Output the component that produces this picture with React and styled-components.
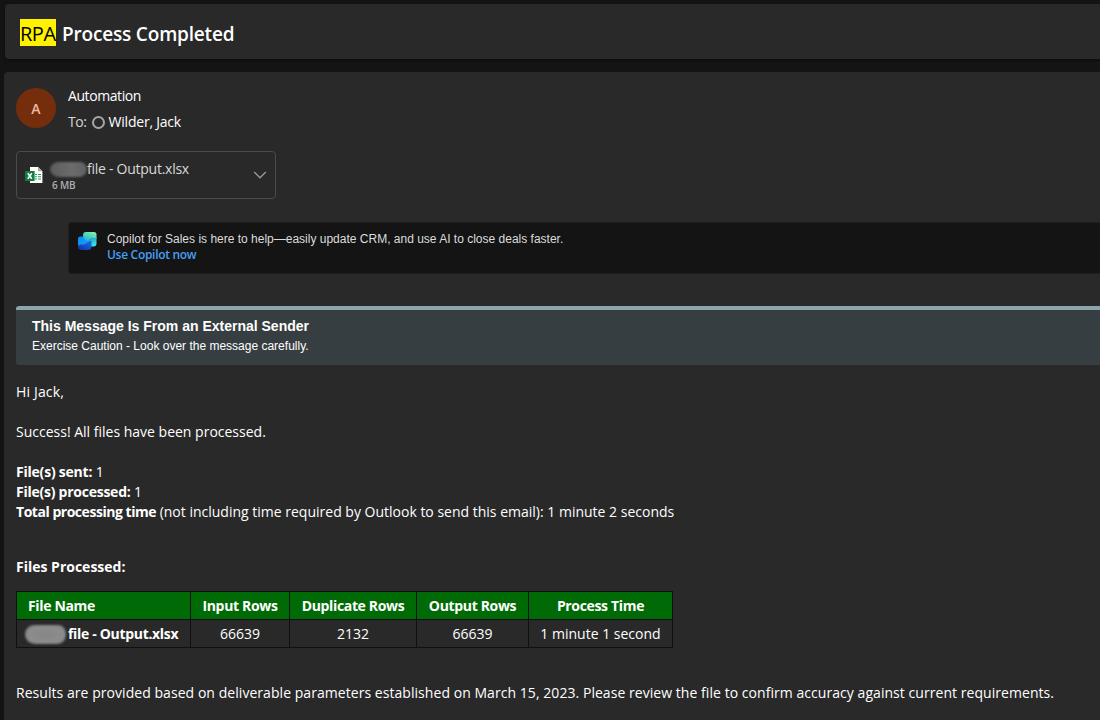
import React from "react";
import styled, { createGlobalStyle } from "styled-components";

const Global = createGlobalStyle`
  *, *::before, *::after { box-sizing: border-box; }
  html, body { margin: 0; background: #141414; }
  body {
    width: 1100px;
    height: 720px;
    overflow: hidden;
    color: #fff;
    font: 400 14px/20px "Open Sans", "Noto Sans", sans-serif;
    white-space: nowrap;
  }
`;

const Page = styled.main`
  display: flex;
  flex-direction: column;
  gap: 13px;
  height: 720px;
  padding: 4px 0 0 4px;
  overflow: hidden;
`;

const SubjectBar = styled.header`
  display: flex;
  align-items: flex-start;
  gap: 6px;
  flex: none;
  height: 55px;
  margin-left: 1px;
  padding: 15px 0 0 15px;
  background: #292929;
  border-radius: 4px 0 0 4px;
  box-shadow: 0 1px 3px rgba(0, 0, 0, 0.5);
  font-size: 20px;
  line-height: 27px;
`;

const Highlight = styled.mark`
  width: 36px;
  height: 27px;
  padding-top: 1px;
  background: #fff100;
  color: #000;
  letter-spacing: -0.5px;
`;

const Subject = styled.h1`
  margin: 2px 0 0;
  font-size: 19px;
  font-weight: 600;
  letter-spacing: -0.18px;
`;

const Message = styled.article`
  display: flex;
  flex-direction: column;
  flex: none;
  height: 660px;
  padding: 15px 0 0 12px;
  background: #292929;
  border-radius: 4px 0 0 0;
`;

const Sender = styled.section`
  display: flex;
  gap: 12px;
  height: 64px;
`;

const Avatar = styled.div`
  display: flex;
  align-items: center;
  justify-content: center;
  width: 40px;
  height: 40px;
  margin-top: 1px;
  padding-top: 1px;
  border-radius: 50%;
  background: #742e0b;
  color: #eaba9f;
  font-size: 14px;
  font-weight: 600;
`;

const SenderLines = styled.div`
  display: flex;
  flex-direction: column;
  gap: 6px;
  margin-top: -1px;
  letter-spacing: -0.42px;
`;

const Recipient = styled.div`
  display: flex;
  align-items: center;
  color: #d6d6d6;
`;

const Presence = styled.span`
  width: 13px;
  height: 13px;
  margin: 1px 4px 0 5px;
  border: 2px solid #a6a6a6;
  border-radius: 50%;
`;

const RecipientName = styled.span`
  color: #fff;
  font-weight: 500;
  letter-spacing: -0.22px;
`;

const Attachment = styled.section`
  display: flex;
  align-items: center;
  width: 260px;
  height: 48px;
  padding: 0 8px 0 8px;
  border: 1px solid #4b4b4b;
  border-radius: 4px;
`;

const FileMeta = styled.div`
  flex: 1;
  margin: 2px 0 0 7px;
`;

const FileLine = styled.div`
  display: flex;
  align-items: center;
  height: 18px;
  color: #d9d9d9;
  letter-spacing: -0.26px;
`;

const Redacted = styled.span`
  flex: none;
  width: ${(p) => p.$w}px;
  height: ${(p) => p.$h}px;
  border-radius: 9px 7px 8px 10px / 50%;
  background: ${(p) => p.$bg};
  filter: blur(0.8px);
`;

const FileSize = styled.div`
  height: 14px;
  padding-left: 2px;
  color: #adadad;
  font-size: 10px;
  font-weight: 600;
  line-height: 14px;
  letter-spacing: -0.15px;
`;

const CopilotBanner = styled.aside`
  display: flex;
  flex: none;
  gap: 10px;
  height: 52px;
  margin: 23px 0 0 52px;
  padding: 9px 0 0 9px;
  border: 1px solid #202020;
  border-right: 0;
  border-radius: 3px 0 0 3px;
  background: #141414;
  color: #dcdcdc;
  font: 400 12px/16px "Liberation Sans", Arial, sans-serif;
`;

const CopilotLink = styled.a`
  display: block;
  color: #479ef5;
  font: 600 12px/16px "Open Sans", sans-serif;
  letter-spacing: -0.3px;
`;

const BannerText = styled.div`
  margin-top: -1px;
`;

const Caution = styled.aside`
  flex: none;
  height: 59px;
  margin-top: 32px;
  padding: 7px 0 0 16px;
  border-top: 4px solid #8ea3ab;
  border-radius: 3px 0 0 3px;
  background: #373e41;
  font: 400 12px/18px "Liberation Sans", Arial, sans-serif;
`;

const CautionTitle = styled.div`
  height: 20px;
  font-size: 14px;
  font-weight: 700;
  line-height: 18px;
`;

const Body = styled.section`
  margin-top: 17px;
`;

const Line = styled.p`
  height: 20px;
  margin: ${(p) => p.$top || 0}px 0 0;
  font-weight: 400;
  letter-spacing: ${(p) => p.$ls || 0}px;
`;

const Label = styled.strong`
  font-weight: 700;
  letter-spacing: ${(p) => p.$ls || 0}px;
`;

const Results = styled.table`
  width: 656px;
  margin-top: 14px;
  border-collapse: collapse;
  table-layout: fixed;
  text-align: center;
`;

const Head = styled.th`
  height: 28px;
  padding: 1px ${(p) => (p.$left ? "0 0 11px" : "0 0")};
  border: 1px solid #101010;
  background: #006b06;
  text-align: ${(p) => (p.$left ? "left" : "center")};
  letter-spacing: -0.34px;
  font-weight: 700;
`;

const Cell = styled.td`
  height: 28px;
  padding: 1px 0 0;
  border: 1px solid #101010;
`;

const FileCell = styled.div`
  display: flex;
  align-items: center;
  gap: 2px;
  padding-left: 8px;
  font-weight: 700;
  letter-spacing: -0.32px;
`;

const ExcelIcon = () => (
  <svg width="18" height="18" viewBox="0 0 18 18">
    <path d="M5 1h8l4.400 4.200V17H5z" fill="#fff" />
    <path d="M13 1v4.200h4.400z" fill="#a7a7a7" />
    <path d="M10 8h2v1h-2zm3 0h3v1h-3zM10 10.200h2v1h-2zm3 0h3v1h-3zM10 12.400h2v1h-2zm3 0h3v1h-3z" fill="#21a366" />
    <rect x="0" y="5" width="9.600" height="10" rx=".5" fill="#107c41" />
    <path d="M2.800 7.200l4 5.600M6.800 7.200l-4 5.600" stroke="#fff" strokeWidth="1.5" fill="none" />
  </svg>
);

const Chevron = () => (
  <svg width="14" height="8" viewBox="0 0 14 8">
    <path d="M1.200 1l5.800 5.800L12.800 1" fill="none" stroke="#999" strokeWidth="1.3" />
  </svg>
);

const CopilotIcon = () => (
  <svg width="19" height="19" viewBox="0 0 19 19">
    <defs>
      <linearGradient id="cpTop" x1="0.2" y1="1" x2="0.9" y2="0">
        <stop offset="0" stopColor="#18b3d6" />
        <stop offset="1" stopColor="#8ff0a8" />
      </linearGradient>
      <linearGradient id="cpRight" x1="0" y1="0" x2="0.5" y2="1">
        <stop offset="0" stopColor="#128fa8" />
        <stop offset="1" stopColor="#3fe0ee" />
      </linearGradient>
      <linearGradient id="cpLeft" x1="0" y1="0" x2="1" y2="1">
        <stop offset="0" stopColor="#0a8af5" />
        <stop offset="1" stopColor="#1ba4f5" />
      </linearGradient>
      <linearGradient id="cpBottom" x1="1" y1="0" x2="0" y2="1">
        <stop offset="0" stopColor="#1a6ff0" />
        <stop offset="1" stopColor="#10309c" />
      </linearGradient>
    </defs>
    <path d="M8 0h8a2.500 2.500 0 0 1 2.500 2.500V7L12 9H5V3A3 3 0 0 1 8 0z" fill="url(#cpTop)" />
    <path d="M18.500 5v6.500a3 3 0 0 1-3 3H11L10 9c2-4 6-2 8.500-4z" fill="url(#cpRight)" />
    <path d="M2.500 4.500H5.500c0 4 3.500 4.500 8 4.500L10 14H0V7a2.500 2.500 0 0 1 2.500-2.500z" fill="url(#cpLeft)" />
    <path d="M0 14c1.500-2.500 4.500-1 7-2 3-1.200 3-3 6.500-3v5.500a3.500 3.500 0 0 1-3.500 3.500H3.500A3.500 3.500 0 0 1 0 14.500z" fill="url(#cpBottom)" />
  </svg>
);

const widths = [174, 99, 127, 112, 144];

export default function App() {
  return (
    <>
      <Global />
      <Page>
        <SubjectBar>
          <Highlight>RPA</Highlight>
          <Subject>Process Completed</Subject>
        </SubjectBar>
        <Message>
          <Sender>
            <Avatar>A</Avatar>
            <SenderLines>
              <div>Automation</div>
              <Recipient>
                To:
                <Presence />
                <RecipientName>Wilder, Jack</RecipientName>
              </Recipient>
            </SenderLines>
          </Sender>
          <Attachment>
            <ExcelIcon />
            <FileMeta>
              <FileLine>
                <Redacted $w={37} $h={15} $bg="linear-gradient(90deg, #5c5c5c, #6c6c6c 60%, #606060)" />
                file - Output.xlsx
              </FileLine>
              <FileSize>6 MB</FileSize>
            </FileMeta>
            <Chevron />
          </Attachment>
          <CopilotBanner>
            <CopilotIcon />
            <BannerText>
              Copilot for Sales is here to help—easily update CRM, and use AI to close deals faster.
              <CopilotLink>Use Copilot now</CopilotLink>
            </BannerText>
          </CopilotBanner>
          <Caution>
            <CautionTitle>This Message Is From an External Sender</CautionTitle>
            Exercise Caution - Look over the message carefully.
          </Caution>
          <Body>
            <Line $ls={0.16}>Hi Jack,</Line>
            <Line $top={20}>Success! All files have been processed.</Line>
            <Line $top={20}><Label $ls={-0.22}>File(s) sent:</Label> 1</Line>
            <Line><Label $ls={-0.25}>File(s) processed:</Label> 1</Line>
            <Line>
              <Label $ls={-0.47}>Total processing time</Label>{" "}
              (not including time required by Outlook to send this email): 1 minute 2 seconds
            </Line>
            <Line $top={35}><Label>Files Processed:</Label></Line>
            <Results>
              <colgroup>{widths.map((w) => <col key={w} width={w} />)}</colgroup>
              <thead>
                <tr>
                  <Head $left>File Name</Head>
                  <Head>Input Rows</Head>
                  <Head>Duplicate Rows</Head>
                  <Head>Output Rows</Head>
                  <Head>Process Time</Head>
                </tr>
              </thead>
              <tbody>
                <tr>
                  <Cell>
                    <FileCell>
                      <Redacted $w={41} $h={19} $bg="radial-gradient(ellipse, #858585, #8d8d8d 60%, #777)" />
                      file - Output.xlsx
                    </FileCell>
                  </Cell>
                  <Cell>66639</Cell>
                  <Cell>2132</Cell>
                  <Cell>66639</Cell>
                  <Cell>1 minute 1 second</Cell>
                </tr>
              </tbody>
            </Results>
            <Line $top={35} $ls={0.05}>
              Results are provided based on deliverable parameters established on March 15, 2023. Please review the file to confirm accuracy against current requirements.
            </Line>
          </Body>
        </Message>
      </Page>
    </>
  );
}
